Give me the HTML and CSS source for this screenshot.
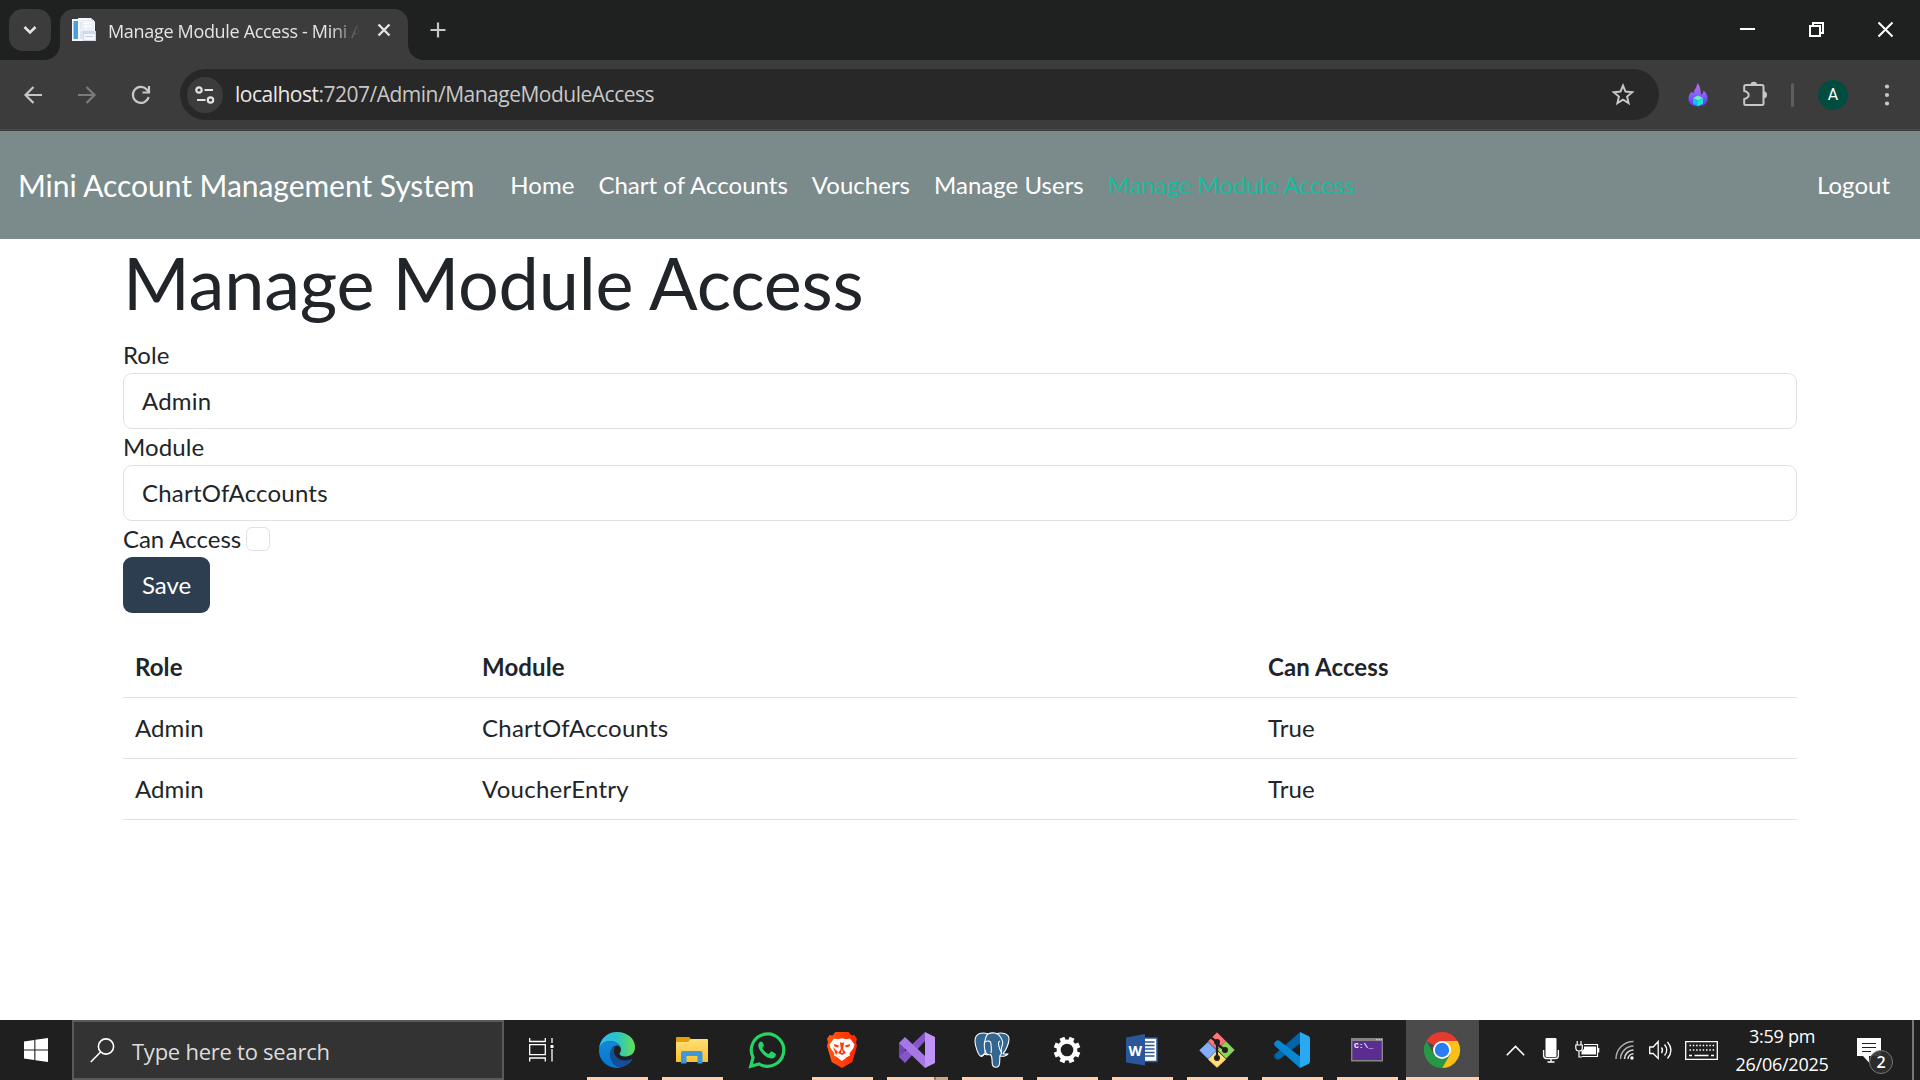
FILE: index.html
```html
<!DOCTYPE html>
<html lang="en">
<head>
<meta charset="utf-8">
<title>Manage Module Access - Mini Account Management System</title>
<link rel="stylesheet" href="styles.css">
</head>
<body>
<div class="screen">
  <header class="tabstrip">
    <button class="tab-search" aria-label="Search tabs"><svg width="14" height="10" viewBox="0 0 14 10"><path d="M1.500 2l5.500 5.500L12.500 2" fill="none" stroke="#e3e3e3" stroke-width="2.600"/></svg></button>
    <div class="tab">
      <svg class="favicon" width="24" height="24" viewBox="0 0 24 24">
        <path d="M6 0h13l4 4v18H6z" fill="#f4f7fb"/><path d="M19 0l4 4h-4z" fill="#c3cddd"/>
        <path d="M0 1h18v22H0z" fill="#f4f8fc"/><path d="M1.500 3h4.500v18H1.500z" fill="#4c9fd8"/>
        <path d="M8 4h8v7H8zM8 13h3v8H8z" fill="#dfe6f2"/><path d="M9 2h13v11H9z" fill="#e9eef7"/><path d="M11 5h9M11 8h9M14 3v9" stroke="#fff"/>
        <path d="M11 13h13v10H11z" fill="#cfd9e8"/><path d="M12 16h11v6H12z" fill="#f4f7fb"/><path d="M13 18.500h8" stroke="#c5cfdf"/>
      </svg>
      <span class="tab-title">Manage Module Access - Mini A</span>
      <svg class="tab-close" width="14" height="14" viewBox="0 0 14 14"><path d="M1.500 1.500l11 11m0-11l-11 11" stroke="#e3e3e3" stroke-width="2.400"/></svg>
    </div>
    <svg class="new-tab" width="16" height="16" viewBox="0 0 16 16"><path d="M8 .5v15M.5 8h15" stroke="#c7c7c7" stroke-width="2.200"/></svg>
    <div class="window-controls">
      <svg width="15" height="15" viewBox="0 0 15 15"><path d="M0 7h15" stroke="#fff" stroke-width="2"/></svg>
      <svg width="15" height="15" viewBox="0 0 15 15" fill="none" stroke="#fff" stroke-width="2"><path d="M1 4h10v10H1zM4 4V1h10v10h-3"/></svg>
      <svg width="15" height="15" viewBox="0 0 15 15"><path d="M.5.5l14 14m0-14l-14 14" stroke="#fff" stroke-width="2"/></svg>
    </div>
  </header>

  <div class="toolbar">
    <div class="nav-buttons">
      <svg width="18" height="18" viewBox="0 0 18 18" fill="none" stroke="#c7c7c7" stroke-width="2.200"><path d="M18 9H2M9.500 1L1.500 9l8 8"/></svg>
      <svg width="18" height="18" viewBox="0 0 18 18" fill="none" stroke="#7b7b7b" stroke-width="2.200"><path d="M0 9h16M8.500 1l8 8-8 8"/></svg>
      <svg width="18" height="18" viewBox="0 0 18 18" fill="none" stroke="#c7c7c7" stroke-width="2.200"><path d="M16.600 11A8 8 0 1 1 14.700 3.400L17 5.700M17 0v6.500h-6.500"/></svg>
    </div>
    <div class="omnibox">
      <span class="site-info"><svg width="20" height="18" viewBox="0 0 20 18" fill="none" stroke="#e3e3e3" stroke-width="2.200"><circle cx="4" cy="4" r="2.700"/><path d="M9.500 4H18M2 14h8.500"/><circle cx="15.500" cy="14" r="2.700"/></svg></span>
      <span class="url"><b>localhost</b>:7207/Admin/ManageModuleAccess</span>
      <svg class="star" width="24" height="23" viewBox="0 0 24 23" fill="none" stroke="#c7c7c7" stroke-width="2"><path d="M12 2.600l2.500 6 6.700.6-5.100 4.400 1.500 6.500L12 16.700l-5.600 3.400 1.500-6.500-5.100-4.400 6.700-.6z"/></svg>
    </div>
    <svg class="flame" width="20" height="24" viewBox="0 0 20 24">
      <defs><linearGradient id="flame" x2="0" y2="1"><stop stop-color="#c66af0"/><stop offset=".5" stop-color="#8660fb"/><stop offset="1" stop-color="#5138f3"/></linearGradient></defs>
      <path d="M9.500 0c2.700 3 3.200 7 3.500 11.500 1.500-.5 2.500-2 2.500-4C18 9.500 19.500 12 19.500 15.500c0 5-4 8-9.700 8S.5 20.500.5 15.500c0-2.600 1.200-5 3.500-7 .2 1.200.6 1.500 1.500 1.500C6 6.500 9 4.500 9.500 0z" fill="url(#flame)"/>
      <path d="M10 12.500l5 2.400-5 2.600-5-2.600z" fill="#6df0b8"/><path d="M5 14.900l5 2.600v5.800l-5-2.600z" fill="#0dc6f0"/><path d="M15 14.900l-5 2.600v5.800l5-2.600z" fill="#26dfd0"/>
    </svg>
    <svg class="puzzle" width="26" height="26" viewBox="0 0 26 26"><path d="M4 4H20q1.500 0 1.500 1.500V22.600q0 1.500-1.500 1.500H3.700q-1.500 0-1.500-1.500V18c6-1.500 6-6.500 0-8V5.500Q2.200 4 4 4z" fill="none" stroke="#c7c7c7" stroke-width="2" stroke-linejoin="round"/><path d="M8.500 4a3.300 3.300 0 0 1 6.600 0M21.500 10.200a3.500 3.500 0 0 1 0 7" fill="#c7c7c7"/></svg>
    <i class="divider"></i>
    <span class="avatar">A</span>
    <svg class="dots" width="4" height="22" viewBox="0 0 4 22" fill="#c7c7c7"><circle cx="2" cy="2.500" r="2.100"/><circle cx="2" cy="11" r="2.100"/><circle cx="2" cy="19.500" r="2.100"/></svg>
  </div>

  <nav class="navbar">
    <a class="brand">Mini Account Management System</a>
    <ul class="nav-list">
      <li>Home</li><li>Chart of Accounts</li><li>Vouchers</li><li>Manage Users</li><li class="active">Manage Module Access</li>
    </ul>
    <a class="logout">Logout</a>
  </nav>

  <main class="container">
    <h1>Manage Module Access</h1>
    <label>Role</label>
    <div class="control">Admin</div>
    <label>Module</label>
    <div class="control">ChartOfAccounts</div>
    <div class="check-row"><label>Can Access</label><span class="checkbox"></span></div>
    <button class="save">Save</button>
    <table>
      <colgroup><col class="col-role"><col class="col-module"><col></colgroup>
      <thead><tr><th>Role</th><th>Module</th><th>Can Access</th></tr></thead>
      <tbody>
        <tr><td>Admin</td><td class="wide">ChartOfAccounts</td><td>True</td></tr>
        <tr><td>Admin</td><td class="wide">VoucherEntry</td><td>True</td></tr>
      </tbody>
    </table>
  </main>

  <footer class="taskbar">
    <div class="start"><svg width="24" height="24" viewBox="0 0 24 24" fill="#fff"><path d="M0 3.400l10.300-1.400v9.400H0zM11.400 1.800L24 0v11.400H11.400zM0 12.500h10.300V22L0 20.600zM11.400 12.500H24V24l-12.600-1.800z"/></svg></div>
    <div class="search">
      <svg width="25" height="25" viewBox="0 0 25 25" fill="none" stroke="#fff" stroke-width="1.600"><circle cx="16" cy="8.500" r="7.600"/><path d="M10.600 14L.8 24"/></svg>
      <span>Type here to search</span>
    </div>
    <div class="task-view"><svg width="25" height="24" viewBox="0 0 25 24" fill="none" stroke="#fff" stroke-width="1.300"><path d="M.7 0v3.500h15.600V0M.7 6.700h15.600v10H.7zM.7 23.500V20h15.600v3.500M23 0v5M23 11v12.500"/><path d="M21.500 7h3v3h-3z" fill="#fff" stroke="none"/></svg></div>
    <div class="apps">
      <div class="app open"><svg width="36" height="36" viewBox="0 0 36 36">
        <defs><linearGradient id="edgeTop"><stop stop-color="#36b8f3"/><stop offset=".5" stop-color="#29c3c9"/><stop offset="1" stop-color="#65e052"/></linearGradient><linearGradient id="edgeLeft" x2="0" y2="1"><stop stop-color="#1388d8"/><stop offset="1" stop-color="#0877cf"/></linearGradient></defs>
        <path d="M0 17C1 6 9 0 18 0c11 0 18 7 18 15 0 6-4 9.500-9.500 9.500-4 0-6-1.300-6-2.800 0-1 1.500-1.700 1.500-4.200C22 13.500 17 9 11 9 5 9 1.500 13 0 17z" fill="url(#edgeTop)"/>
        <path d="M0 18C.5 12 5 9 11 9c6 0 10 3.500 11 7-1-1.700-3-2.500-4.500-2.500-3 0-7 4-6 10C12.300 30 17 35 22 35.500 10 38-.5 29 0 18z" fill="url(#edgeLeft)"/>
        <path d="M17 14c-4 1-7 5-6 10.500C12 31 17 36 22.500 35.300 28 34 31.500 31 33.500 27.500c.3-.7-.3-1-1-.6C24 31 15 26 15 19c0-2 .7-4 2-5z" fill="#134f99"/>
      </svg></div>
      <div class="app open"><svg width="36" height="36" viewBox="0 0 36 36">
        <defs><linearGradient id="folder" x2="0" y2="1"><stop stop-color="#ffe078"/><stop offset="1" stop-color="#fdc02e"/></linearGradient></defs>
        <path d="M2 6q0-1 1-1h12l2 2v3H2z" fill="#e2a00a"/><path d="M2 10h12l3-3h16q1 0 1 1v22H2z" fill="url(#folder)"/><path d="M7 31.500V21q0-2 2-2h17.500q2 0 2 2v10.500h-5V24H12.500v7.500z" fill="#3c98dd"/>
      </svg></div>
      <div class="app"><svg width="36" height="36" viewBox="0 0 36 36">
        <path d="M1.700 34.300l2.400-8.800A16.200 16.200 0 1 1 10.200 32z" fill="none" stroke="#25d366" stroke-width="3.200"/>
        <path d="M12.200 9.500c-1.800.2-3.200 2.100-2.900 4.600.5 4.800 6.500 11.300 12.600 12.300 3 .4 5-1.700 5-4 0-.8-3.800-2.800-4.700-2.800-1 0-1.700 2.500-2.800 2.300-2.200-.7-5.200-3.500-6-5.600-.2-.8 1.500-1.800 1.500-2.700 0-.8-1.300-4.100-2.700-4.100z" fill="#25d366"/>
      </svg></div>
      <div class="app open"><svg width="36" height="36" viewBox="0 0 36 36">
        <defs><linearGradient id="brave"><stop stop-color="#ff5a14"/><stop offset="1" stop-color="#ff2600"/></linearGradient></defs>
        <path d="M11.500 0h13l3 3.500L30.500 3l2.500 4-1 3 1 4-4.700 16L18 36 7.700 30 3 14l1-4-1-3 2.500-4 3 .5z" fill="url(#brave)"/>
        <path d="M10 6.500l4 .8 4-1 4 1 4-.8 4.500 6-1 3.500-4 5.500.5 2-4 2-1-1h-6l-1 1-4-2 .5-2-4-5.500-1-3.500z" fill="#fff"/>
        <path d="M10 12l5 1.500-1 2-3.500-1zM26 12l-5 1.500 1 2 3.500-1zM16 10l2 1 2-1-.8 7 2.800 4-4 2-4-2 2.800-4zM9 15l5 5-2 3z" fill="#fb3b0b"/><path d="M18 11v6l-1 4h2l-1-4M13.500 25.500L18 23.300l4.500 2.200L18 29z" fill="#fff"/>
      </svg></div>
      <div class="app open grouped"><svg width="36" height="36" viewBox="0 0 36 36">
        <path d="M0 11l6-3v20l-6-3z" fill="#6f46ad"/><path d="M0 25l6 6L26 9V0z" fill="#8655c9"/><path d="M0 11l6-6 20 19v12z" fill="#a777e5"/><path d="M26 0l10 5v26l-10 5z" fill="#bf93f8"/>
      </svg></div>
      <div class="app open"><svg width="36" height="36" viewBox="0 0 36 36" fill="#336791" stroke="#fff" stroke-width="1.100" stroke-linejoin="round">
        <path d="M14 2C9 0 1 .5 1 9c0 4 3 15 6.500 15.500 1 0 2-1.500 3-2.800 1 1.300 3 1 4 .3L17 15z"/><path d="M22 2c5-2 13-1 13 5 0 4-3 12-6 14.500 1.500.5 4 .7 5 .2-1 2.300-5 3-8 2.300L20 12z"/>
        <path d="M14 2c4-2 10-1.500 12.500 3 2 3 3 6 1.500 9-1 2-1 5-.5 7.500l-1.500 2c-.5 3 .3 7-1 10-1 2.500-5.500 2.500-6.500-.5-1-4 .5-8-2-10.500-3 1-5-1-5.500-4-.7-3-1-7 0-9.500C11.500 5.500 12 3.500 14 2z"/>
        <path d="M11 10c3-2 6-1 6 2s1 5 0 9M11 18c1 3-1 5-4 6M26 9c-3 1-1 7 1.500 12" fill="none"/>
      </svg></div>
      <div class="app open"><svg width="28" height="28" viewBox="0 0 28 28"><g stroke="#fff" stroke-width="5.200"><path d="M14 .7v26.600M.7 14h26.600M4.600 4.600l18.800 18.800M23.400 4.600L4.600 23.400" transform="rotate(22.500 14 14)"/></g><circle cx="14" cy="14" r="10.400" fill="#fff"/><circle cx="14" cy="14" r="6.300" fill="#1f1f1f"/></svg></div>
      <div class="app open"><svg width="32" height="32" viewBox="0 0 32 32">
        <path d="M18 4h13v23.500H18z" fill="#fff" stroke="#2b579a" stroke-width="1.500"/><path d="M18 8h10.500M18 11.500h10.500M18 15h10.500M18 18.500h10.500M18 22h10.500" stroke="#2b579a" stroke-width="1.600"/><path d="M0 3.500L19 0v31.500L0 28.500z" fill="#2b579a"/><text x="9.300" y="21.500" class="word-letter">W</text>
      </svg></div>
      <div class="app open"><svg width="36" height="36" viewBox="0 0 36 36">
        <path d="M18 .8l8.500 8.500L18 17.500 9.500 9.300z" fill="#ff7474" stroke="#ff7474" stroke-linejoin="round"/><path d="M9 10.500L17.200 18.500 9 26.500.8 18.300z" fill="#82aefb" stroke="#82aefb" stroke-linejoin="round"/><path d="M27 9.700l8.200 8.300L27 26.300 19 18z" fill="#8ad35c" stroke="#8ad35c" stroke-linejoin="round"/><path d="M18 19l8.500 8.300L18 35.300l-8.500-8z" fill="#ffde75" stroke="#ffde75" stroke-linejoin="round"/>
        <path d="M10 4l8 6v15M18 12l8 6" fill="none" stroke="#1f1f1f" stroke-width="2.200"/><circle cx="18" cy="10" r="3" fill="#1f1f1f"/><circle cx="18" cy="26" r="3" fill="#1f1f1f"/><circle cx="26" cy="18" r="3" fill="#1f1f1f"/>
      </svg></div>
      <div class="app open"><svg width="36" height="36" viewBox="0 0 36 36">
        <path d="M26 0L1 22c-1.300 1.500-1 3 0 4l1.500 1.200c1 .7 2 .6 3 0L28 10z" fill="#0065a9"/><path d="M26 36L1 14c-1.300-1.500-1-3 0-4l1.500-1.200c1-.7 2-.6 3 0L28 26z" fill="#0788d1"/><path d="M26 0l8.500 4q1.500.7 1.500 2.500v23q0 1.800-1.500 2.500L26 36z" fill="#29a9f2"/>
      </svg></div>
      <div class="app open"><svg width="32" height="24" viewBox="0 0 32 24"><path d="M.7.7h30.600v22H.7z" fill="#5b2d90" stroke="#858585" stroke-width="1.400"/><path d="M1 1h30v2H1z" fill="#858585"/><path d="M25 1.700h1.500M27.500 1.700H29M30 1.700h1" stroke="#ddd"/><text x="3" y="10" class="prompt">C:\_</text></svg></div>
      <div class="app open current"><svg width="36" height="36" viewBox="0 0 36 36">
        <path d="M18 18L2.400 9a18 18 0 0 1 31.200 0z" fill="#e33b2e"/><path d="M18 9h15.600A18 18 0 0 1 18 36l7.800-13.500z" fill="#fbc116"/><path d="M2.400 9l7.800 13.500A9 9 0 0 0 25.800 22.500L18 36A18 18 0 0 1 2.400 9z" fill="#269947"/><circle cx="18" cy="18" r="9" fill="#fff"/><circle cx="18" cy="18" r="7.200" fill="#2a7cf0"/>
      </svg></div>
    </div>
    <div class="tray">
      <svg width="19" height="11" viewBox="0 0 19 11" fill="none" stroke="#fff" stroke-width="1.600"><path d="M.8 10.200l8.700-8.700 8.700 8.700"/></svg>
      <svg class="mic" width="16" height="25" viewBox="0 0 16 25"><rect x="2.500" width="11" height="19" rx="1" fill="#fff"/><path d="M.6 12v5.500q0 3 3 3h8.800q3 0 3-3V12M8 20.500V24M4.500 24h7" fill="none" stroke="#fff" stroke-width="1.300"/></svg>
      <svg class="battery" width="25" height="18" viewBox="0 0 25 18" fill="none" stroke="#fff" stroke-width="1.200"><path d="M2.200 0v4M6 0v4M.8 4h6.500v3q0 3-3.200 3T.8 7zM4 10v6h3M9 3.500h13.500V15.500H7M23.700 7v4.500"/><path d="M9 5.500h12v8H6.500V10L9 8z" fill="#fff" stroke="none"/></svg>
      <svg class="wifi" width="20" height="20" viewBox="0 0 20 20" fill="none" stroke="#ddd" stroke-width="1.500"><path d="M1 19C1 9 9 1.500 18.500 1.500M5.500 19c0-7 6-13 13-13" opacity=".75"/><path d="M9.500 19c0-5 4-9 9-9M13 19c0-3 2.500-5.200 5.500-5.200"/><circle cx="17" cy="18" r="1.700" fill="#fff" stroke="none"/></svg>
      <svg class="volume" width="23" height="20" viewBox="0 0 23 20" fill="none" stroke="#fff" stroke-width="1.300"><path d="M.7 7v6.500h3.500l5 5v-17l-5 5.500zM12.500 7.500q2 2.700 0 5.500M15.500 4.500q4.500 5.500 0 11M18.500 2q7 8.300 0 16.500"/></svg>
      <svg class="keyboard" width="33" height="19" viewBox="0 0 33 19" fill="none" stroke="#fff" stroke-width="1.300"><path d="M.7.7h31.600v17.600H.7z"/><path d="M4.500 4.500h25M4.500 9h25" stroke-dasharray="1.500 1.800"/><path d="M4 14.500h3M9.500 14.500h14M26 14.500h3"/></svg>
      <div class="clock"><span class="time">3:59 pm</span><span class="date">26/06/2025</span></div>
      <div class="notice"><svg width="24" height="25" viewBox="0 0 24 25"><path d="M0 0h24v18H12v6.500L6 18H0z" fill="#fff"/><path d="M5 5.500h14M5 9.500h14M5 13.500h9" stroke="#1f1f1f" stroke-width="1.200"/></svg><span class="badge">2</span></div>
      <i class="show-desktop"></i>
    </div>
  </footer>
</div>
</body>
</html>
```
FILE: styles.css
```css
* { box-sizing: border-box; }
body { margin: 0; background: #fff; color: #212529; font: 24px/36px Lato, sans-serif; }
svg { display: block; flex: none; overflow: visible; }
button { border: 0; padding: 0; font: inherit; }
.screen { display: flex; flex-direction: column; width: 1920px; height: 1080px; overflow: hidden; }

/* Browser tab strip */
.tabstrip { display: flex; align-items: center; height: 60px; flex: none; padding-left: 9px; background: #1f2020; }
.tab-search { display: grid; place-items: center; width: 42px; height: 42px; border-radius: 14px; background: #3c3c3c; }
.tab { position: relative; align-self: flex-end; display: flex; align-items: center; width: 348px; height: 51px; margin-left: 9px; padding: 0 17px 9px 12px; border-radius: 14px 14px 0 0; background: #3c3c3c; }
.tab::before, .tab::after { content: ""; position: absolute; bottom: 0; width: 15px; height: 15px; }
.tab::before { left: -15px; background: radial-gradient(circle at 0 0, transparent 14.5px, #3c3c3c 15px); }
.tab::after { right: -15px; background: radial-gradient(circle at 100% 0, transparent 14.5px, #3c3c3c 15px); }
.tab-title { width: 252px; margin: 2px 0 0 12px; white-space: nowrap; color: #e3e3e3; font: 18px/24px "Open Sans", sans-serif; letter-spacing: -.32px; -webkit-mask-image: linear-gradient(90deg, #000 222px, transparent 252px); mask-image: linear-gradient(90deg, #000 222px, transparent 252px); }
.tab-close { margin-left: auto; }
.new-tab { margin-left: 22px; }
.window-controls { display: flex; gap: 54px; margin: 0 27px 1px auto; }

/* Address bar */
.toolbar { display: flex; align-items: center; height: 71px; flex: none; padding: 0 31px 2px 24px; background: linear-gradient(#3c3c3c 69px, #4a4a4a 69px, #4a4a4a 70px, #3d3d3d 70px); }
.nav-buttons { display: flex; gap: 36px; }
.omnibox { display: flex; align-items: center; width: 1479px; height: 51px; margin-left: 30px; padding: 0 24px 0 7px; border-radius: 26px; background: #282828; }
.site-info { display: grid; place-items: center; width: 36px; height: 36px; border-radius: 50%; background: #3c3c3c; }
.url { margin: 0 0 1px 12px; color: #c7c7c7; font: 21px/30px "Open Sans", sans-serif; letter-spacing: -.5px; white-space: nowrap; }
.url b { font-weight: 400; color: #e8e8e8; }
.star { margin: 0 0 1px auto; }
.flame { margin-left: 29px; }
.puzzle { margin: 0 0 2px 34px; }
.divider { width: 3px; height: 24px; margin-left: 23px; border-radius: 2px; background: #5e5e5e; }
.avatar { width: 30px; height: 30px; margin-left: 24px; border-radius: 50%; background: #004d40; color: #fff; font: 16px/30px Roboto, sans-serif; text-align: center; }
.dots { margin-left: auto; }

/* Site navigation */
.navbar { display: flex; align-items: center; height: 108px; flex: none; padding: 0 18px; background: #7b8a8b; color: #fff; }
.brand { font-size: 30px; line-height: 45px; letter-spacing: -.045px; }
.nav-list { display: flex; margin: 0 0 0 24px; padding: 0; list-style: none; letter-spacing: .02px; }
.nav-list li, .logout { padding: 0 12px; }
.active { color: #18bc9c; letter-spacing: -.06px; }
.logout { margin-left: auto; }

/* Page content */
.container { width: 1710px; flex: 1; margin: 0 auto; padding: 0 18px; }
h1 { margin: 0 0 12px; font-weight: 400; font-size: 72px; line-height: 86.4px; letter-spacing: -.2px; }
label { display: block; letter-spacing: .1px; }
.control { height: 56px; padding: 9px 18px; border: 1px solid #dee2e6; border-radius: 9px; letter-spacing: .2px; }
.check-row { display: flex; align-items: center; gap: 5px; height: 36px; }
.check-row label { letter-spacing: -.05px; }
.checkbox { width: 24px; height: 24px; border: 1px solid #dee2e6; border-radius: 6px; }
.save { display: block; width: 87px; height: 56px; border-radius: 9px; background: #2c3e50; color: #fff; }
table { width: 100%; margin-top: 24px; border-collapse: separate; border-spacing: 0; table-layout: fixed; }
.col-role { width: 347px; }
.col-module { width: 786px; }
th, td { padding: 12px; border-bottom: 1px solid #dee2e6; text-align: left; letter-spacing: .1px; }
td.wide { letter-spacing: .25px; }
th { font-weight: 700; }

/* Desktop taskbar */
.taskbar { display: flex; height: 60px; flex: none; background: #1f1f1f; color: #fff; font-family: "Open Sans", sans-serif; }
.start { display: grid; place-items: center; width: 72px; }
.search { display: flex; align-items: center; width: 432px; padding-left: 16px; border: 2px solid #5a5a5a; background: #333; color: #dcdcdc; font-size: 22px; }
.search span { margin: 1px 0 0 17px; letter-spacing: -.25px; white-space: nowrap; }
.task-view { display: grid; place-items: center; width: 76px; padding-right: 2px; }
.apps { display: flex; }
.app { position: relative; display: grid; place-items: center; width: 75px; height: 60px; padding-right: 2px; }
.open::after { content: ""; position: absolute; left: 7px; right: 7px; bottom: 0; height: 3px; background: #ffd0ab; }
.grouped::after { background: linear-gradient(90deg, #ffd0ab 47px, #927c6c 47px, #927c6c 49px, #cba78b 49px); }
.current { background: linear-gradient(90deg, transparent 1px, #4b4b4b 1px, #4b4b4b 74px, transparent 74px); }
.current::after { left: 1px; right: 1px; }
.word-letter { fill: #fff; font: 700 14px "Open Sans", sans-serif; text-anchor: middle; }
.prompt { fill: #fff; font: 700 8px "Liberation Mono", monospace; }
.tray { display: flex; align-items: center; flex: 1; padding-left: 26px; }
.mic { margin-left: 18px; }
.battery { margin-left: 16px; }
.wifi { margin-left: 15px; }
.volume { margin-left: 14px; }
.keyboard { margin-left: 13px; }
.clock { display: flex; flex-direction: column; align-items: center; width: 102px; margin: 0 0 0 13px; font-size: 18px; line-height: 28px; white-space: nowrap; letter-spacing: -.25px; }
.notice { position: relative; margin-left: 24px; }
.badge { position: absolute; left: 12px; top: 12px; width: 24px; height: 24px; border: 1px solid #777; border-radius: 50%; background: #2d2d2de6; font: 600 16px/22px "Open Sans", sans-serif; text-align: center; }
.show-desktop { align-self: stretch; width: 2px; margin: 0 6px 0 auto; background: #777; }
```
